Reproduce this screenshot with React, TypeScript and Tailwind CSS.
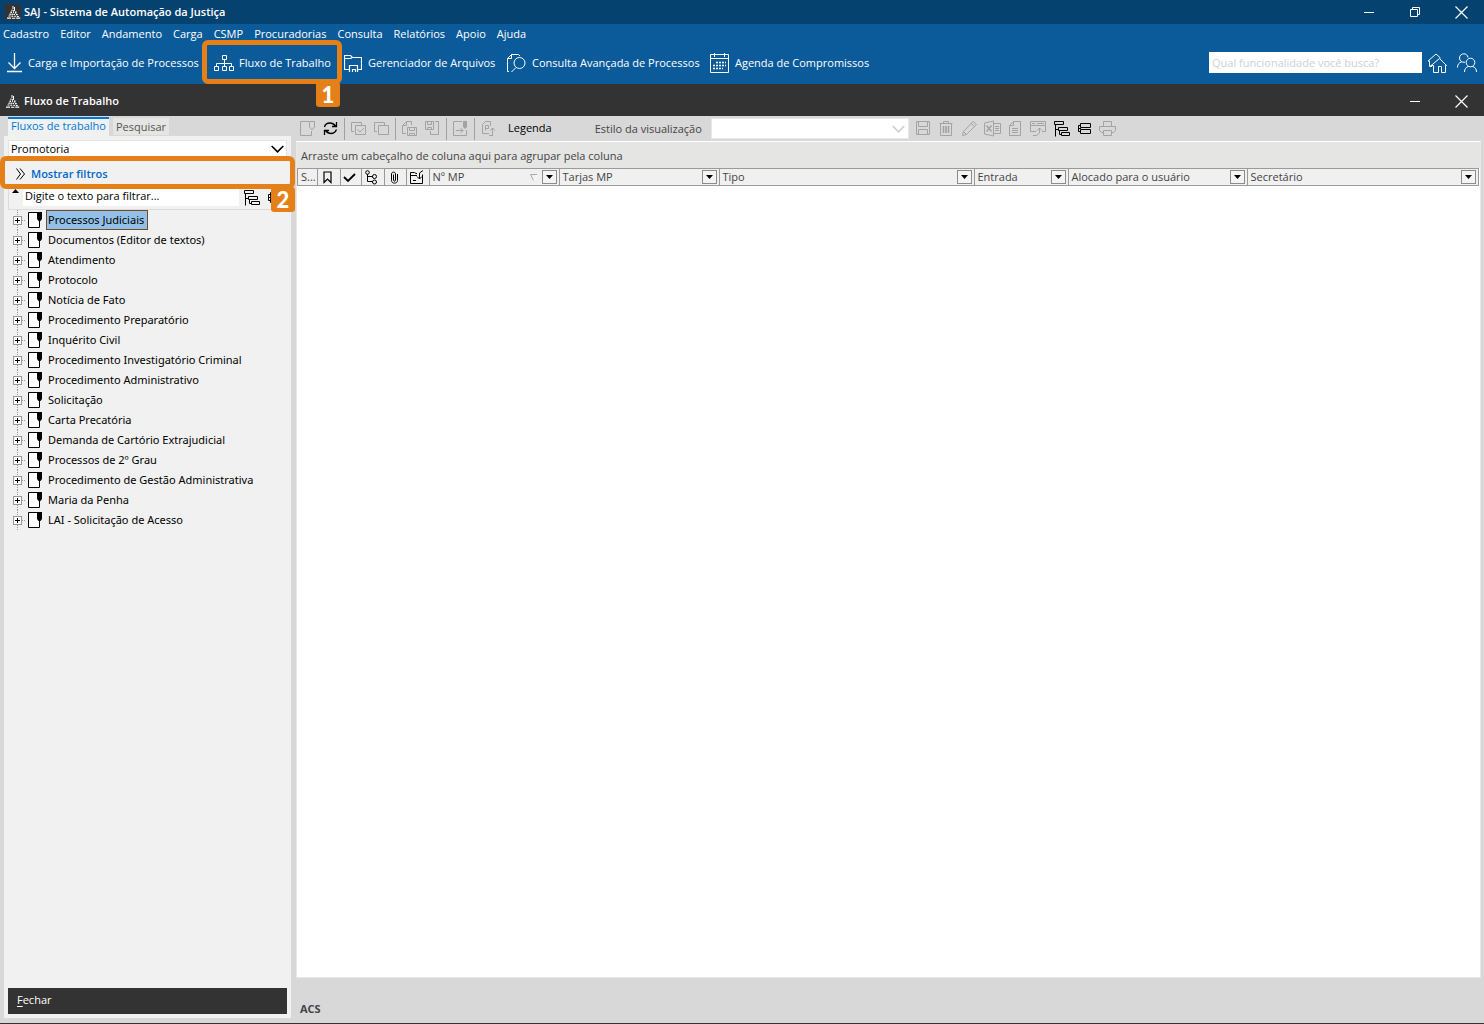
import { useState, type ReactNode } from "react";

type IconProps = { w?: number; h?: number; children: ReactNode; className?: string };

function Icon({ w = 17, h = 17, children, className = "" }: IconProps) {
  return (
    <svg
      width={w}
      height={h}
      viewBox={`0 0 ${w} ${h}`}
      fill="none"
      stroke="currentColor"
      strokeWidth="1"
      aria-hidden="true"
      className={`shrink-0 ${className}`}
    >
      {children}
    </svg>
  );
}

function Logo({ className = "" }: { className?: string }) {
  return (
    <Icon w={15} h={15} className={className}>
      <path
        d="M6.5 1H7.5V4H6.5ZM8 2H9V6H8ZM5.5 4.5H6.5V6H5.5ZM7 5H7.8V8H7ZM4.5 6.5H6V8H4.5ZM9 6.5H10.5V8.5H9ZM3.5 8.5H4.8V10H3.5ZM5.5 8.5H6.8V10.5H5.5ZM7.5 8.8H9V10H7.5ZM10 9H11.8V10.2H10ZM2.5 10.5H4.5V11.5H2.5ZM5.3 11.2H7.3V12H5.3ZM8.2 10.8H10.2V11.8H8.2ZM11 11H12.8V12H11ZM1 12.5H5V13.7H1ZM6 12.8H9.3V13.7H6ZM10.2 12.5H14.2V13.7H10.2Z"
        fill="currentColor"
        stroke="none"
      />
    </Icon>
  );
}

function CloseIcon() {
  return (
    <Icon w={13} h={13}>
      <path d="M0.5 0.5L12.5 12.5M12.5 0.5L0.5 12.5" strokeWidth="1.2" />
    </Icon>
  );
}

function TreeIcon() {
  return (
    <Icon>
      <path d="M1.5 1.5H10.5V4.5H1.5ZM5.5 7.5H14.5V10.5H5.5ZM8.5 12.5H16.5V15.5H8.5ZM2.5 5V16.5M2.5 9.5H5M6.5 11V14.5H8.5" />
    </Icon>
  );
}

function SplitIcon() {
  return (
    <Icon>
      <path d="M4.5 3.5H14.5V7.5H4.5ZM4.5 9.5H14.5V13.5H4.5ZM4 5.5H2.5V11.5H4M2.5 8.5H5" />
    </Icon>
  );
}

function Chevron({ className = "" }: { className?: string }) {
  return (
    <Icon w={13} h={8} className={className}>
      <path d="M0.7 1L6.5 6.8L12.3 1" strokeWidth="1.7" />
    </Icon>
  );
}

const menus = ["Cadastro", "Editor", "Andamento", "Carga", "CSMP", "Procuradorias", "Consulta", "Relatórios", "Apoio", "Ajuda"];

const folders = [
  "Processos Judiciais",
  "Documentos (Editor de textos)",
  "Atendimento",
  "Protocolo",
  "Notícia de Fato",
  "Procedimento Preparatório",
  "Inquérito Civil",
  "Procedimento Investigatório Criminal",
  "Procedimento Administrativo",
  "Solicitação",
  "Carta Precatória",
  "Demanda de Cartório Extrajudicial",
  "Processos de 2º Grau",
  "Procedimento de Gestão Administrativa",
  "Maria da Penha",
  "LAI - Solicitação de Acesso",
];

function Step({ n, className }: { n: number; className: string }) {
  return (
    <span
      className={`pointer-events-none absolute z-20 flex h-[25px] w-6 items-center justify-center rounded-[3px] bg-[#e58019] font-['Lato',sans-serif] text-[22px] leading-none font-black text-white ${className}`}
    >
      {n}
    </span>
  );
}

function Shortcut({ icon, label, className, children }: { icon: ReactNode; label: string; className: string; children?: ReactNode }) {
  return (
    <button className={`relative flex h-10 shrink-0 items-center whitespace-nowrap ${className}`}>
      {icon}
      <span>{label}</span>
      {children}
    </button>
  );
}

function Tool({ label, children, active = false }: { label: string; children: ReactNode; active?: boolean }) {
  return (
    <button
      aria-label={label}
      className={`flex h-[25px] w-[23px] shrink-0 items-center justify-center ${active ? "text-black" : "text-[#a3a3a3]"}`}
    >
      {children}
    </button>
  );
}

function Sep() {
  return <span className="mx-0.5 h-[22px] w-px shrink-0 bg-[#a0a0a0]" />;
}

function HeaderCell({ label, children, filter = true }: { label: string; children?: ReactNode; filter?: boolean }) {
  return (
    <th scope="col" className="h-4 border-r border-[#9a9a9a] p-0 text-left font-normal last:border-r-0">
      <div className="flex h-4 items-center justify-between pr-0.5 pl-[3px]">
        <span className="whitespace-nowrap">{label}</span>
        <span className="flex items-center gap-1">
          {children}
          {filter && (
            <button aria-label={`Filtrar ${label}`} className="flex h-3.5 w-[15px] items-center justify-center border border-[#8c8c8c] bg-[#f4f4f4] text-black">
              <Icon w={7} h={4}>
                <path d="M0 0H7L3.5 4Z" fill="currentColor" stroke="none" />
              </Icon>
            </button>
          )}
        </span>
      </div>
    </th>
  );
}

function IconHeader({ label, children }: { label: string; children: ReactNode }) {
  return (
    <th scope="col" aria-label={label} className="h-4 border-r border-[#9a9a9a] p-0 text-black">
      <div className="flex h-4 items-center justify-center pr-0.5">{children}</div>
    </th>
  );
}

export default function App() {
  const [selected, setSelected] = useState(folders[0]);

  return (
    <div className="flex h-screen flex-col overflow-hidden border-b border-[#333] bg-[#d8d8d8] font-['Open_Sans','Noto_Sans',sans-serif] text-[11px] leading-4 text-black">
      <header className="bg-[#0b5b9b] text-white">
        <div className="flex h-6 items-center bg-[#05426f] pl-[5px]">
          <span className="flex size-4 items-center justify-center bg-[#333]">
            <Logo />
          </span>
          <h1 className="ml-[3px] flex-1 font-semibold">SAJ - Sistema de Automação da Justiça</h1>
          <div className="flex h-[18px] items-center">
            <button aria-label="Minimizar" className="flex h-full w-[46px] items-center justify-center">
              <span className="h-px w-2.5 bg-white" />
            </button>
            <button aria-label="Restaurar" className="flex h-full w-[46px] items-center justify-center">
              <Icon w={10} h={10}>
                <path d="M0.5 2.5H7.5V9.5H0.5ZM2.5 2V0.5H9.5V7.5H8" />
              </Icon>
            </button>
            <button aria-label="Fechar janela" className="flex h-full w-[46px] items-center justify-center">
              <CloseIcon />
            </button>
          </div>
        </div>
        <nav className="flex h-5 items-center gap-[11px] pl-[3px]">
          {menus.map((m) => (
            <button key={m}>{m}</button>
          ))}
        </nav>
        <div className="flex h-10 items-center pb-0.5">
          <Shortcut
            className="w-[202px] gap-1.5 pl-1.5"
            label="Carga e Importação de Processos"
            icon={
              <Icon w={16} h={20}>
                <path d="M8.5 0V15.5M2.5 9.5L8.5 15.5L14.5 9.5M1 18.5H16" strokeWidth="1.3" />
              </Icon>
            }
          />
          <Shortcut
            className="w-[140px] gap-1 pl-3"
            label="Fluxo de Trabalho"
            icon={
              <Icon w={21} h={18}>
                <path d="M8.5 1.5H12.5V5.5H8.5ZM0.5 12.5H4.5V16.5H0.5ZM8.5 12.5H12.5V16.5H8.5ZM15.5 12.5H19.5V16.5H15.5ZM10.5 6V12M2.5 12V9.5H17.5V12" />
              </Icon>
            }
          >
            <span className="pointer-events-none absolute inset-x-0 -top-[3px] -bottom-px rounded-md border-[5px] border-[#e58019]" />
            <Step n={1} className="right-0.5 top-[39px]" />
          </Shortcut>
          <Shortcut
            className="w-[164px] gap-1.5 pl-0.5"
            label="Gerenciador de Arquivos"
            icon={
              <Icon w={18} h={19}>
                <path d="M5 15.5H0.5V1.5H6.5L8.5 3.5H17.5V15.5H14M0.5 4.5H6.5L8.5 3.5M5.5 18V11.5H13.5V18M8.5 18V15.5H11.5V18" strokeWidth="1.2" />
              </Icon>
            }
          />
          <Shortcut
            className="w-[203px] gap-1.5"
            label="Consulta Avançada de Processos"
            icon={
              <Icon w={20} h={20}>
                <path d="M3 18.5H1.5V5.5L5.5 1.5H12.5L14 3M5.5 1.5V5.5H1.5M10 14.5L5.5 19" />
                <circle cx="13.5" cy="10" r="5.5" />
              </Icon>
            }
          />
          <Shortcut
            className="gap-1.5 pl-px"
            label="Agenda de Compromissos"
            icon={
              <Icon w={19} h={20}>
                <path d="M0.5 1.5H18.5V19.5H0.5ZM0.5 5.5H18.5M4.5 0V4M14.5 0V4" />
                <path d="M6 9.5H16M3 12.5H16M3 15.5H13" strokeWidth="1.6" strokeDasharray="2 1" />
              </Icon>
            }
          />
          <div className="ml-auto flex items-center gap-1.5 pr-[7px]">
            <input
              aria-label="Buscar funcionalidade"
              placeholder="Qual funcionalidade você busca?"
              className="mb-0.5 h-[21px] w-[213px] bg-white px-[3px] text-black placeholder:text-[#ccd2d2]"
            />
            <button aria-label="Início">
              <Icon w={19} h={20}>
                <path d="M1.5 13V8H0L8 1L12.5 5M1.5 13.5H4M2.5 13L11.5 5.5L18.5 12.5H17.5V19.5H13.5V13.5H10.5V19.5H5.5V12.5H2.5" />
              </Icon>
            </button>
            <button aria-label="Usuários" className="ml-1">
              <Icon w={20} h={20}>
                <path d="M8 9.2C5 9.7 2.5 8 2.5 5C2.5 2.5 4.5 0.8 6.8 0.8C9 0.8 10.5 2 11 4.5" />
                <circle cx="13.5" cy="9.5" r="4.3" />
                <path d="M0.5 14.5C0.5 11.5 2 9.5 4.5 9M7.5 19C7.5 16 9 14 11.5 13.5M15.5 13.5C18 14 19.5 16 19.5 19" />
              </Icon>
            </button>
          </div>
        </div>
      </header>

      <div className="flex h-8 shrink-0 items-center bg-[#333] pt-0.5 pl-[5px] text-white">
        <Logo className="mr-1" />
        <h2 className="flex-1 font-semibold">Fluxo de Trabalho</h2>
        <button aria-label="Minimizar fluxo" className="flex h-6 w-[46px] items-center justify-center">
          <span className="h-px w-2.5 bg-white" />
        </button>
        <button aria-label="Fechar fluxo" className="flex h-6 w-[46px] items-center justify-center">
          <CloseIcon />
        </button>
      </div>

      <div className="flex min-h-0 flex-1">
        <aside className="ml-1 flex w-[287px] shrink-0 flex-col pb-[5px]">
          <div role="tablist" className="flex h-5 items-end gap-1 pl-1">
            <button role="tab" aria-selected="true" className="h-[19px] w-[101px] border-t-2 border-[#0078d7] bg-[#f1f1f1] pb-1 leading-3 text-[#0078d7]">
              Fluxos de trabalho
            </button>
            <button role="tab" aria-selected="false" className="mb-px h-[17px] w-14 bg-[#e5e5e3] text-[#555]">
              Pesquisar
            </button>
          </div>
          <div className="flex min-h-0 flex-1 flex-col bg-[#f1f1f1] px-1 pt-1 pb-1">
            <div className="relative h-[17px] border border-b-0 border-[#e4e4e4] bg-white">
              <select aria-label="Promotoria" className="h-full w-full appearance-none px-0.5 leading-4">
                <option>Promotoria</option>
              </select>
              <Chevron className="pointer-events-none absolute top-1 right-0.5" />
            </div>
            <div className="relative h-8">
              <button className="flex h-full w-full items-center gap-1.5 pt-0.5 pl-2 font-semibold text-[#0066cc]">
                <Icon w={9} h={12} className="text-black">
                  <path d="M0.5 0.5L4.5 6L0.5 11.5M4 0.5L8.5 6L4 11.5" />
                </Icon>
                Mostrar filtros
              </button>
              <span className="pointer-events-none absolute -inset-x-2 -top-px z-10 h-[33px] rounded-md border-[5px] border-[#e58019]" />
              <Step n={2} className="-right-2 top-[30px]" />
            </div>
            <div className="flex h-[21px] shrink-0 items-start border-b border-l border-[#dcdcdc]">
              <Icon w={14} h={8} className="text-black">
                <path d="M6.5 0L10 4H3Z" fill="currentColor" stroke="none" />
              </Icon>
              <input
                aria-label="Filtrar texto"
                defaultValue="Digite o texto para filtrar..."
                className="h-[17px] min-w-0 flex-1 bg-white px-0.5 pb-1"
              />
              <button aria-label="Expandir tudo" className="ml-1">
                <TreeIcon />
              </button>
              <button aria-label="Recolher tudo" className="mr-1 ml-1.5">
                <SplitIcon />
              </button>
            </div>
            <ul role="tree" aria-label="Fluxos de trabalho" className="flex-1 font-['Noto_Sans',sans-serif]">
              {folders.map((f) => (
                <li key={f} role="treeitem" aria-selected={f === selected} className="flex h-5 items-center">
                  <Icon w={38} h={20} className="text-black">
                    <path d="M9.5 0V5M9.5 15V20M14 10.5H18" stroke="#999" strokeDasharray="1 1" />
                    <rect x="5.5" y="6.5" width="8" height="8" stroke="#999" fill="#fff" />
                    <path d="M7 10.5H12M9.5 8V13" />
                    <path d="M20.5 2.5H31.5V17.5H20.5Z" fill="#fff" />
                    <path d="M29 2H34V9L32.5 11H30.5L29 9Z" fill="currentColor" stroke="none" />
                  </Icon>
                  <button
                    onClick={() => setSelected(f)}
                    className={`h-5 whitespace-nowrap border pr-[3px] pl-px leading-4 ${
                      f === selected ? "border-[#7a4a20] bg-[#92c0e8]" : "border-transparent"
                    }`}
                  >
                    {f}
                  </button>
                </li>
              ))}
            </ul>
            <button className="h-[26px] bg-[#333] px-[9px] pb-0.5 text-left text-white">
              <u className="underline-offset-2">F</u>echar
            </button>
          </div>
        </aside>

        <main className="mr-[3px] ml-[5px] flex min-w-0 flex-1 flex-col">
          <div className="flex h-[25px] shrink-0 items-center">
            <Tool label="Novo">
              <Icon>
                <path d="M10 1.5H1.5V15.5H12.5V11M10.5 1.5H15.5V7L13 10L10.5 7Z" />
              </Icon>
            </Tool>
            <Tool label="Atualizar" active>
              <Icon>
                <path d="M2.5 7C3 4.5 5 3 8 3C10.5 3 12 4 13.5 6M14.5 2V6.5H10M14.5 9.5C13.5 12 11.5 13.5 9 13.5C6.5 13.5 5 12.5 3.5 10.5M2.5 15V10.5H7" strokeWidth="1.3" />
              </Icon>
            </Tool>
            <Sep />
            <Tool label="Marcar todos">
              <Icon>
                <path d="M4 11.5H1.5V2.5H11.5V5M5.5 5.5H15.5V14.5H5.5ZM7.5 9.5L10 12L14 8" />
              </Icon>
            </Tool>
            <Tool label="Desmarcar todos">
              <Icon>
                <path d="M4 11.5H1.5V2.5H11.5V5M5.5 5.5H15.5V14.5H5.5Z" />
              </Icon>
            </Tool>
            <Sep />
            <Tool label="Salvar cópia">
              <Icon>
                <path d="M5 13.5H1.5V5.5L5.5 1.5H10.5V5M5.5 2V5.5H2M6.5 7.5H15.5V15.5H6.5ZM8.5 8V10.5H13.5V8M8.5 15V13.5H13.5V15" />
              </Icon>
            </Tool>
            <Tool label="Salvar e mover">
              <Icon>
                <path d="M1.5 1.5H9.5V9.5H1.5ZM3.5 2V4.5H7.5V2M3.5 9V7.5H7.5V9M11 1.5H14.5V14.5H6.5V11" />
              </Icon>
            </Tool>
            <Sep />
            <Tool label="Encaminhar">
              <Icon>
                <path d="M10 1.5H1.5V15.5H14.5V10M4 10.5H11M8.5 8L11 10.5L8.5 13" />
                <path d="M11 1H15V7L13 9L11 7Z" fill="currentColor" stroke="none" />
              </Icon>
            </Tool>
            <Sep />
            <Tool label="Exportar">
              <Icon>
                <path d="M9 13.5H2.5V4.5L5.5 1.5H10.5V6M5.5 10.5V5.5H8.5V8.5H5.5M12.5 15V8M10 10.5L12.5 8L15 10.5M9 15.5H13" />
              </Icon>
            </Tool>
            <button className="ml-2 shrink-0 pb-0.5">Legenda</button>
            <label htmlFor="estilo" className="ml-[43px] shrink-0 text-[#444]">
              Estilo da visualização
            </label>
            <div className="relative ml-[9px] h-[21px] w-[198px] border border-[#e8e8e8] bg-white">
              <select id="estilo" className="h-full w-full appearance-none" defaultValue="">
                <option value=""></option>
              </select>
              <Chevron className="pointer-events-none absolute top-1.5 right-[3px] text-[#d0d0d0]" />
            </div>
            <div className="ml-[3px] flex">
              <Tool label="Salvar">
                <Icon>
                  <path d="M1.5 1.5H14.5V14.5H1.5ZM3.5 2V6.5H12.5V2M3.5 14V9.5H12.5V14" />
                </Icon>
              </Tool>
              <Tool label="Excluir">
                <Icon>
                  <path d="M1.5 3.5H14.5M5.5 3V1.5H10.5V3M2.5 4V15.5H13.5V4" />
                  <path d="M5.5 6V13M8 6V13M10.5 6V13" strokeWidth="1.6" />
                </Icon>
              </Tool>
              <Tool label="Editar">
                <Icon>
                  <path d="M1.5 15.5L2.5 11.5L12 1.5L15.5 4.5L5.5 14.5ZM2.5 11.5L5.5 14.5M10 3.5L13.5 6.5" />
                </Icon>
              </Tool>
              <Tool label="Excel">
                <Icon>
                  <path d="M0.5 3L9.5 1V16L0.5 14ZM10 3.5H16.5V13.5H10M11 6.5H15M11 8.5H15M11 10.5H15" />
                  <path d="M2.5 5.5L7.5 11.5M7.5 5.5L2.5 11.5" strokeWidth="1.5" />
                </Icon>
              </Tool>
              <Tool label="Documento">
                <Icon>
                  <path d="M2.5 5.5L6.5 1.5H13.5V15.5H2.5ZM6.5 2V5.5H3M5 8.5H11M5 10.5H11M5 12.5H11" />
                </Icon>
              </Tool>
              <Tool label="Restaurar visualização">
                <Icon>
                  <path d="M6 11.5H0.5V1.5H15.5V11.5H12M0.5 5.5H15.5M2 3.5H5M7 3.5H14M3 15.5H6.5L9.5 13V8M7 10.5L9.5 8L12 10.5" />
                </Icon>
              </Tool>
              <Tool label="Expandir grupos" active>
                <TreeIcon />
              </Tool>
              <Tool label="Recolher grupos" active>
                <SplitIcon />
              </Tool>
              <Tool label="Imprimir">
                <Icon>
                  <path d="M4.5 6V1.5H12.5V6M4 12.5H2.5L0.5 10.5V6.5H16.5V10.5L14.5 12.5H13M4.5 10.5H12.5V15.5H4.5Z" />
                </Icon>
              </Tool>
            </div>
          </div>
          <section className="flex min-h-0 flex-1 flex-col border border-[#e8e8e8] border-t-white bg-white">
            <p className="flex h-[26px] shrink-0 items-center bg-[#e5e5e3] pt-0.5 pl-1 text-[#444]">
              Arraste um cabeçalho de coluna aqui para agrupar pela coluna
            </p>
            <div className="mr-px border border-[#9a9a9a] bg-[#f1f0f1]">
              <table className="w-full table-fixed border-collapse text-[#444]">
                <colgroup>
                  <col className="w-[19px]" />
                  <col className="w-[23px]" />
                  <col className="w-[21px]" />
                  <col className="w-[23px]" />
                  <col className="w-[22px]" />
                  <col className="w-[23px]" />
                  <col className="w-[130px]" />
                  <col className="w-[160px]" />
                  <col className="w-[255px]" />
                  <col className="w-[94px]" />
                  <col className="w-[179px]" />
                  <col />
                </colgroup>
                <thead>
                  <tr>
                    <HeaderCell label="S..." filter={false} />
                    <IconHeader label="Marcador">
                      <Icon w={9} h={13}>
                        <path d="M1 1H8V11.5L4.5 8L1 11.5Z" strokeWidth="1.2" />
                      </Icon>
                    </IconHeader>
                    <IconHeader label="Concluído">
                      <Icon w={13} h={11}>
                        <path d="M1 5L5 9L12 2" strokeWidth="1.8" />
                      </Icon>
                    </IconHeader>
                    <IconHeader label="Fluxo">
                      <Icon w={13} h={15}>
                        <path d="M2.5 4V11.5H8M2.5 6.5H8" />
                        <circle cx="2.5" cy="2.5" r="1.8" />
                        <circle cx="9.5" cy="6.5" r="2" />
                        <circle cx="9.5" cy="12" r="2" />
                      </Icon>
                    </IconHeader>
                    <IconHeader label="Anexos">
                      <Icon w={9} h={13}>
                        <path d="M3.5 3.5V9C3.5 10.5 5.5 10.5 5.5 9V3C5.5 0.5 1.5 0.5 1.5 3V9.5C1.5 13 7.5 13 7.5 9.5V3" />
                      </Icon>
                    </IconHeader>
                    <IconHeader label="Pasta">
                      <Icon w={15} h={15}>
                        <path d="M8 3.5H7L5.5 2.5H1.5V13.5H13.5V4.5M1.5 5.5H8M14 0.5L10.5 3V8.5M8 6.5L10.5 9L13 6.5M4 10.5H7" />
                      </Icon>
                    </IconHeader>
                    <HeaderCell label="Nº MP">
                      <Icon w={8} h={7}>
                        <path d="M7.5 0.5H0.5L3.5 6.5" stroke="#aaa" />
                        <path d="M7.5 0.5L4 6.5" stroke="#fff" />
                      </Icon>
                    </HeaderCell>
                    <HeaderCell label="Tarjas MP" />
                    <HeaderCell label="Tipo" />
                    <HeaderCell label="Entrada" />
                    <HeaderCell label="Alocado para o usuário" />
                    <HeaderCell label="Secretário" />
                  </tr>
                </thead>
              </table>
            </div>
          </section>
          <footer className="flex h-[45px] shrink-0 items-center pt-4 pl-1 font-bold text-[#444]">ACS</footer>
        </main>
      </div>
    </div>
  );
}
